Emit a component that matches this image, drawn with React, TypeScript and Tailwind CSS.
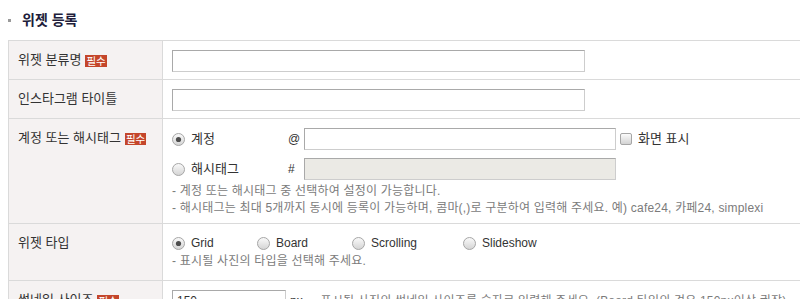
import React from "react";

const font = "font-['Liberation_Sans','Noto_Sans_CJK_KR',sans-serif]";

const Badge = () => (
  <span className="ml-[4px] inline-block h-[12px] bg-[#c4462b] px-[1px] align-middle text-[10.5px] leading-[12px] text-white">
    필수
  </span>
);

const Radio = ({ checked = false }: { checked?: boolean }) => (
  <svg width="13" height="13" viewBox="0 0 13 13" className="shrink-0">
    <defs>
      <linearGradient id={checked ? "rg1" : "rg0"} x1="0" y1="0" x2="0" y2="1">
        <stop offset="0" stopColor="#fbfbfb" />
        <stop offset="1" stopColor="#d3d3d3" />
      </linearGradient>
    </defs>
    <circle cx="6.5" cy="6.5" r="6" fill={`url(#${checked ? "rg1" : "rg0"})`} stroke="#a6a6a6" strokeWidth="1" />
    {checked && <circle cx="6.5" cy="6.5" r="2.6" fill="#4d4d4d" />}
  </svg>
);

const Help = ({ children }: { children: React.ReactNode }) => (
  <p className="text-[12px] leading-[17px] tracking-[0.2px] text-[#7b7b7b]">{children}</p>
);

const TextInput = ({
  width,
  disabled = false,
  value = "",
}: {
  width: string;
  disabled?: boolean;
  value?: string;
}) => (
  <div
    className={`${width} h-[22px] border border-t-[#a9a9a9] border-l-[#a9a9a9] border-r-[#cdcdcd] border-b-[#cdcdcd] px-[4px] text-[12px] leading-[20px] text-[#333] ${
      disabled ? "bg-[#ebeae5]" : "bg-white"
    }`}
  >
    {value}
  </div>
);

const Row = ({
  label,
  required = false,
  children,
  className = "",
}: {
  label: string;
  required?: boolean;
  children: React.ReactNode;
  className?: string;
}) => (
  <div className="flex border-b border-[#dadada]">
    <div className="w-[154px] shrink-0 border-r border-[#dadada] bg-[#f5f2f2] pl-[9px] pt-[9px] text-[13px] leading-[20px] text-[#333]">
      {label}
      {required && <Badge />}
    </div>
    <div className={`flex-1 pl-[9px] ${className}`}>{children}</div>
  </div>
);

export default function App() {
  return (
    <div className={`h-[299px] w-[800px] overflow-hidden bg-white ${font}`}>
      {/* TITLE */}
      <div className="flex h-[40px] items-center pl-[8px] pt-[1px]">
        <span className="mr-[11px] h-[3px] w-[3px] bg-[#9a9a9a]" />
        <h2 className="text-[14px] font-bold text-[#211d3b]">위젯 등록</h2>
      </div>

      {/* TABLE */}
      <div className="ml-[8px] border-l border-t border-[#dadada]">
        <Row label="위젯 분류명" required className="pb-[7px] pt-[9px]">
          <TextInput width="w-[413px]" />
        </Row>

        <Row label="인스타그램 타이틀" className="pb-[7px] pt-[9px]">
          <TextInput width="w-[413px]" />
        </Row>

        <Row label="계정 또는 해시태그" required className="pb-[6px] pt-[9px]">
          <div className="flex h-[22px] items-center text-[13px] text-[#333]">
            <div className="flex w-[116px] items-center gap-[6px]">
              <Radio checked />
              <span>계정</span>
            </div>
            <span className="w-[16px] text-[12px]">@</span>
            <TextInput width="w-[312px]" />
            <span className="ml-[4px] h-[12px] w-[12px] rounded-[2px] border border-[#a6a6a6] bg-gradient-to-b from-[#fbfbfb] to-[#d3d3d3]" />
            <span className="ml-[6px]">화면 표시</span>
          </div>
          <div className="mt-[8px] flex h-[22px] items-center text-[13px] text-[#333]">
            <div className="flex w-[116px] items-center gap-[6px]">
              <Radio />
              <span>해시태그</span>
            </div>
            <span className="w-[16px] text-[12px]">#</span>
            <TextInput width="w-[312px]" disabled />
          </div>
          <div className="mt-[3px]">
            <Help>- 계정 또는 해시태그 중 선택하여 설정이 가능합니다.</Help>
            <Help>
              - 해시태그는 최대 5개까지 동시에 등록이 가능하며, 콤마(,)로 구분하여 입력해 주세요. 예) cafe24, 카페24, simplexi
            </Help>
          </div>
        </Row>

        <Row label="위젯 타입" className="pb-[10px] pt-[9px]">
          <div className="flex h-[20px] items-center text-[12px] text-[#333]">
            {[
              { name: "Grid", w: "w-[85px]", checked: true },
              { name: "Board", w: "w-[95px]", checked: false },
              { name: "Scrolling", w: "w-[111px]", checked: false },
              { name: "Slideshow", w: "w-[100px]", checked: false },
            ].map((t) => (
              <div key={t.name} className={`flex ${t.w} items-center gap-[6px]`}>
                <Radio checked={t.checked} />
                <span>{t.name}</span>
              </div>
            ))}
          </div>
          <Help>- 표시될 사진의 타입을 선택해 주세요.</Help>
        </Row>

        <Row label="썸네일 사이즈" required className="pb-[7px] pt-[9px]">
          <div className="flex h-[22px] items-center text-[12px] text-[#333]">
            <TextInput width="w-[114px]" value="150" />
            <span className="ml-[4px]">px</span>
            <span className="ml-[10px] tracking-[0.2px] text-[#7b7b7b]">
              - 표시될 사진의 썸네일 사이즈를 숫자로 입력해 주세요. (Board 타입의 경우 150px이상 권장)
            </span>
          </div>
        </Row>
      </div>
    </div>
  );
}
